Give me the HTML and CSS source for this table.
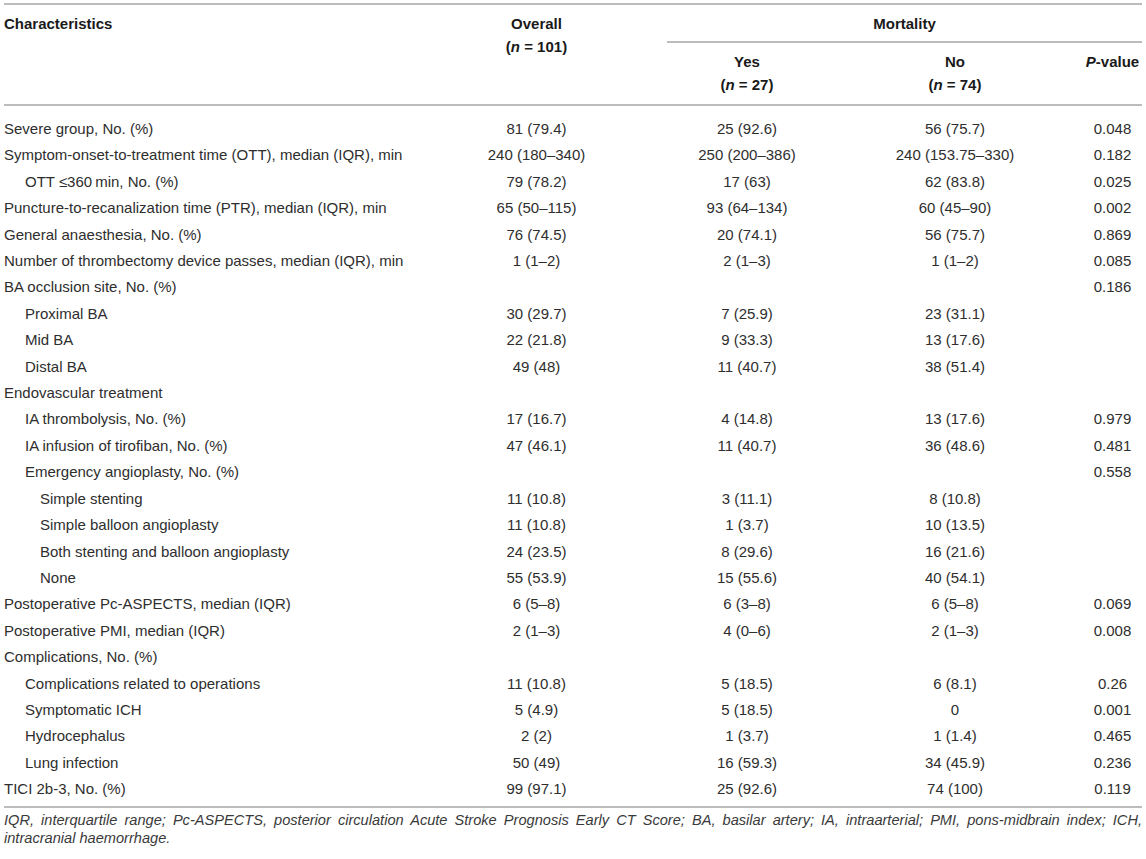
FILE: index.html
```html
<!DOCTYPE html>
<html lang="en">
<head>
<meta charset="utf-8">
<title>Table</title>
<link rel="stylesheet" href="styles.css">
</head>
<body>
<div class="page">
<table class="tbl">
<colgroup>
<col class="c-char"><col class="c-all"><col class="c-yes"><col class="c-no"><col class="c-p">
</colgroup>
<thead>
<tr class="h1">
<th class="th-char top bot" rowspan="2">Characteristics</th>
<th class="th-num top bot" rowspan="2">Overall<br>(<i>n</i> = 101)</th>
<th class="th-num top mort" colspan="3">Mortality</th>
</tr>
<tr class="h2">
<th class="th-num bot">Yes<br>(<i>n</i> = 27)</th>
<th class="th-num bot">No<br>(<i>n</i> = 74)</th>
<th class="th-num bot"><i>P</i>-value</th>
</tr>
</thead>
<tbody>
<tr class="first"><td>Severe group, No. (%)</td><td>81 (79.4)</td><td>25 (92.6)</td><td>56 (75.7)</td><td>0.048</td></tr>
<tr><td>Symptom-onset-to-treatment time (OTT), median (IQR), min</td><td>240 (180–340)</td><td>250 (200–386)</td><td>240 (153.75–330)</td><td>0.182</td></tr>
<tr><td class="l1">OTT ≤360&thinsp;min, No. (%)</td><td>79 (78.2)</td><td>17 (63)</td><td>62 (83.8)</td><td>0.025</td></tr>
<tr><td>Puncture-to-recanalization time (PTR), median (IQR), min</td><td>65 (50–115)</td><td>93 (64–134)</td><td>60 (45–90)</td><td>0.002</td></tr>
<tr><td>General anaesthesia, No. (%)</td><td>76 (74.5)</td><td>20 (74.1)</td><td>56 (75.7)</td><td>0.869</td></tr>
<tr><td>Number of thrombectomy device passes, median (IQR), min</td><td>1 (1–2)</td><td>2 (1–3)</td><td>1 (1–2)</td><td>0.085</td></tr>
<tr><td>BA occlusion site, No. (%)</td><td></td><td></td><td></td><td>0.186</td></tr>
<tr><td class="l1">Proximal BA</td><td>30 (29.7)</td><td>7 (25.9)</td><td>23 (31.1)</td><td></td></tr>
<tr><td class="l1">Mid BA</td><td>22 (21.8)</td><td>9 (33.3)</td><td>13 (17.6)</td><td></td></tr>
<tr><td class="l1">Distal BA</td><td>49 (48)</td><td>11 (40.7)</td><td>38 (51.4)</td><td></td></tr>
<tr><td>Endovascular treatment</td><td></td><td></td><td></td><td></td></tr>
<tr><td class="l1">IA thrombolysis, No. (%)</td><td>17 (16.7)</td><td>4 (14.8)</td><td>13 (17.6)</td><td>0.979</td></tr>
<tr><td class="l1">IA infusion of tirofiban, No. (%)</td><td>47 (46.1)</td><td>11 (40.7)</td><td>36 (48.6)</td><td>0.481</td></tr>
<tr><td class="l1">Emergency angioplasty, No. (%)</td><td></td><td></td><td></td><td>0.558</td></tr>
<tr><td class="l2">Simple stenting</td><td>11 (10.8)</td><td>3 (11.1)</td><td>8 (10.8)</td><td></td></tr>
<tr><td class="l2">Simple balloon angioplasty</td><td>11 (10.8)</td><td>1 (3.7)</td><td>10 (13.5)</td><td></td></tr>
<tr><td class="l2">Both stenting and balloon angioplasty</td><td>24 (23.5)</td><td>8 (29.6)</td><td>16 (21.6)</td><td></td></tr>
<tr><td class="l2">None</td><td>55 (53.9)</td><td>15 (55.6)</td><td>40 (54.1)</td><td></td></tr>
<tr><td>Postoperative Pc-ASPECTS, median (IQR)</td><td>6 (5–8)</td><td>6 (3–8)</td><td>6 (5–8)</td><td>0.069</td></tr>
<tr><td>Postoperative PMI, median (IQR)</td><td>2 (1–3)</td><td>4 (0–6)</td><td>2 (1–3)</td><td>0.008</td></tr>
<tr><td>Complications, No. (%)</td><td></td><td></td><td></td><td></td></tr>
<tr><td class="l1">Complications related to operations</td><td>11 (10.8)</td><td>5 (18.5)</td><td>6 (8.1)</td><td>0.26</td></tr>
<tr><td class="l1">Symptomatic ICH</td><td>5 (4.9)</td><td>5 (18.5)</td><td>0</td><td>0.001</td></tr>
<tr><td class="l1">Hydrocephalus</td><td>2 (2)</td><td>1 (3.7)</td><td>1 (1.4)</td><td>0.465</td></tr>
<tr><td class="l1">Lung infection</td><td>50 (49)</td><td>16 (59.3)</td><td>34 (45.9)</td><td>0.236</td></tr>
<tr class="last"><td>TICI 2b-3, No. (%)</td><td>99 (97.1)</td><td>25 (92.6)</td><td>74 (100)</td><td>0.119</td></tr>
</tbody>
</table>
<p class="note">IQR, interquartile range; Pc-ASPECTS, posterior circulation Acute Stroke Prognosis Early CT Score; BA, basilar artery; IA, intraarterial; PMI, pons-midbrain index; ICH, intracranial haemorrhage.</p>
</div>
</body>
</html>
```

FILE: styles.css
```css
html, body {
  margin: 0;
  padding: 0;
  background: #ffffff;
}

.page {
  padding: 3px 4px 0 4px;
  font-family: "Liberation Sans", Arial, sans-serif;
  color: #2e2e2e;
}

.tbl {
  width: 1138px;
  table-layout: fixed;
  border-collapse: separate;
  border-spacing: 0;
  font-size: 15px;
}

.c-char { width: 402px; }
.c-all { width: 261px; }
.c-yes { width: 160px; }
.c-no { width: 256px; }
.c-p { width: 59px; }

.tbl th {
  font-weight: bold;
  color: #1a1a1a;
  line-height: 23px;
  padding: 7px 0 8px 0;
  vertical-align: top;
}

.tbl th i {
  font-style: italic;
}

.th-char {
  text-align: left;
}

.th-num {
  text-align: center;
}

.top {
  border-top: 2px solid #bcbcbc;
}

.bot {
  border-bottom: 2px solid #bcbcbc;
}

.mort {
  padding-bottom: 6px !important;
  border-bottom: 2px solid #bcbcbc;
}

.tbl td {
  padding: 3px 0;
  line-height: 20.4px;
  text-align: center;
  white-space: nowrap;
}

.tbl td:first-child {
  text-align: left;
}

.tbl td.l1 {
  padding-left: 21px;
}

.tbl td.l2 {
  padding-left: 36px;
}

.tbl tr.first td {
  padding-top: 13px;
}

.tbl tr.last td {
  padding-bottom: 6px;
  border-bottom: 2px solid #bcbcbc;
}

.note {
  margin: 3px 0 0 0;
  width: 1138px;
  font-size: 14.6px;
  line-height: 18px;
  font-style: italic;
  text-align: justify;
  color: #3a3a3a;
}
```
